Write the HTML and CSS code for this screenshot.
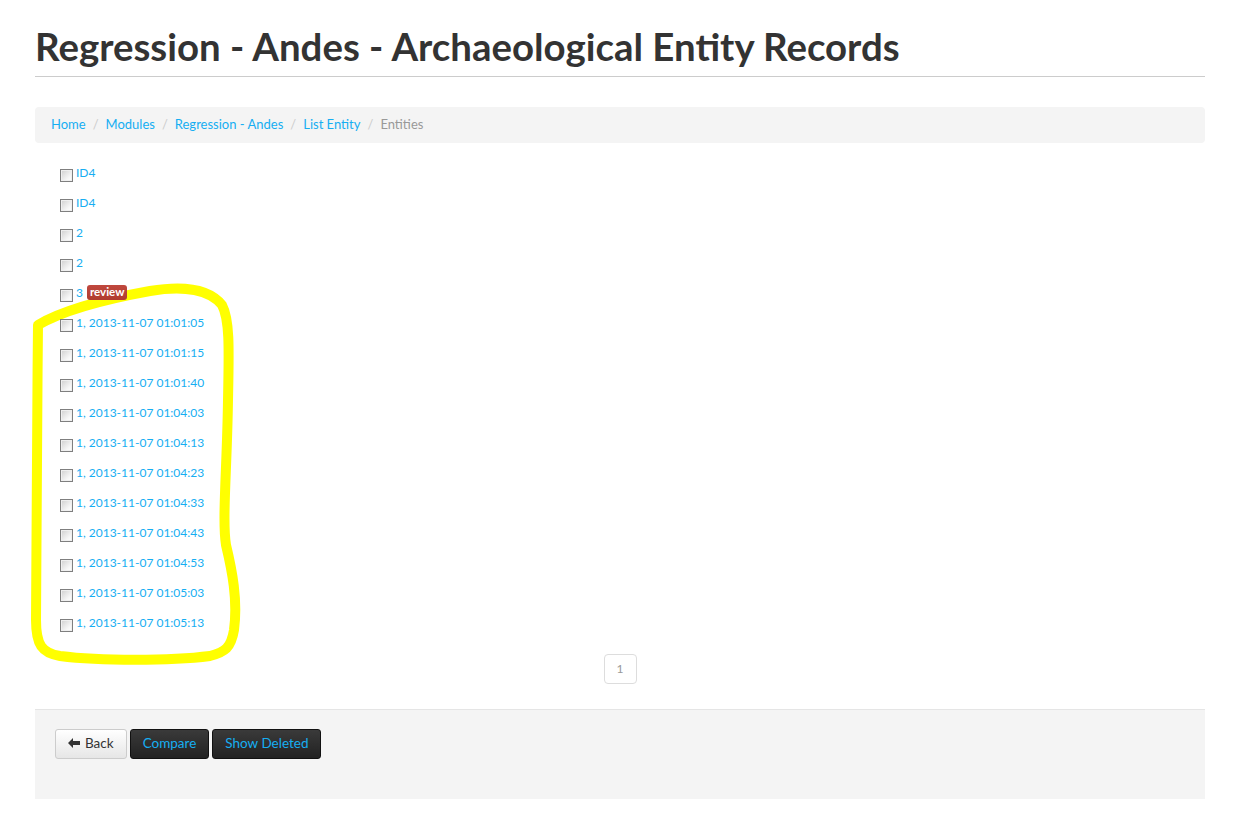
FILE: index.html
```html
<!DOCTYPE html>
<html>
<head>
<meta charset="utf-8">
<link rel="stylesheet" href="styles.css">
</head>
<body>
<div class="container">
  <h1 class="page-title">Regression - Andes - Archaeological Entity Records</h1>
  <ul class="breadcrumb">
    <li><a href="#">Home</a></li>
    <li><a href="#">Modules</a></li>
    <li><a href="#">Regression - Andes</a></li>
    <li><a href="#">List Entity</a></li>
    <li class="active">Entities</li>
  </ul>
  <div class="entities">
    <svg class="scribble" width="260" height="400" viewBox="0 0 260 400">
      <path d="M38 45 C60 32 100 20 150 11 C185 5 210 10 222 25 C230 40 229 70 228 120 C227 190 222 240 226 265 C232 290 238 320 234 350 C231 368 225 372 210 376 C170 381 100 381 60 376 C42 373 36 365 36 340 C36 260 37 150 38 45 Z" fill="none" stroke="#ffff00" stroke-width="10" stroke-linejoin="round"/>
    </svg>
    <ul class="entity-list">
      <li><input type="checkbox" class="cb"><a href="#">ID4</a></li>
      <li><input type="checkbox" class="cb"><a href="#">ID4</a></li>
      <li><input type="checkbox" class="cb"><a href="#">2</a></li>
      <li><input type="checkbox" class="cb"><a href="#">2</a></li>
      <li><input type="checkbox" class="cb"><a href="#">3</a><span class="label">review</span></li>
      <li><input type="checkbox" class="cb"><a href="#">1, 2013-11-07 01:01:05</a></li>
      <li><input type="checkbox" class="cb"><a href="#">1, 2013-11-07 01:01:15</a></li>
      <li><input type="checkbox" class="cb"><a href="#">1, 2013-11-07 01:01:40</a></li>
      <li><input type="checkbox" class="cb"><a href="#">1, 2013-11-07 01:04:03</a></li>
      <li><input type="checkbox" class="cb"><a href="#">1, 2013-11-07 01:04:13</a></li>
      <li><input type="checkbox" class="cb"><a href="#">1, 2013-11-07 01:04:23</a></li>
      <li><input type="checkbox" class="cb"><a href="#">1, 2013-11-07 01:04:33</a></li>
      <li><input type="checkbox" class="cb"><a href="#">1, 2013-11-07 01:04:43</a></li>
      <li><input type="checkbox" class="cb"><a href="#">1, 2013-11-07 01:04:53</a></li>
      <li><input type="checkbox" class="cb"><a href="#">1, 2013-11-07 01:05:03</a></li>
      <li><input type="checkbox" class="cb"><a href="#">1, 2013-11-07 01:05:13</a></li>
    </ul>
  </div>
  <div class="pager"><span class="page">1</span></div>
  <div class="form-actions">
    <button class="btn btn-default"><svg class="arrow" width="12" height="10" viewBox="0 0 12 10"><path d="M0 5 L5 0 L5 3 L12 3 L12 7 L5 7 L5 10 Z" fill="#333"/></svg>Back</button>
    <button class="btn btn-dark">Compare</button>
    <button class="btn btn-dark">Show Deleted</button>
  </div>
</div>
</body>
</html>
```
FILE: styles.css
```css
* { box-sizing: border-box; }
body {
  margin: 0;
  font-family: "Lato", "Open Sans", sans-serif;
  color: #333;
  background: #fff;
}
.container {
  width: 1170px;
  margin-left: 35px;
}
.page-title {
  margin: 0;
  padding-top: 25px;
  padding-bottom: 8px;
  font-size: 38.4px;
  font-weight: 700;
  line-height: 43px;
  color: #333;
  border-bottom: 1px solid #ccc;
}
.breadcrumb {
  list-style: none;
  margin: 30px 0 0;
  padding: 0 16px 2px;
  height: 36px;
  display: flex;
  align-items: center;
  background: #f4f4f4;
  border-radius: 4px;
  font-size: 13px;
}
.breadcrumb li { color: #999; }
.breadcrumb li + li::before {
  content: "/";
  color: #ccc;
  padding: 0 7px;
}
.breadcrumb a { color: #16aef2; text-decoration: none; }
.entities {
  position: relative;
  margin-top: 14px;
}
.scribble {
  position: absolute;
  left: -35px;
  top: 123px;
}
.entity-list {
  position: relative;
  list-style: none;
  margin: 0;
  padding: 0 0 0 25px;
}
.entity-list li {
  height: 30px;
  display: flex;
  align-items: center;
  font-size: 12px;
}
.entity-list a { color: #16aef2; text-decoration: none; }
.cb {
  appearance: none;
  -webkit-appearance: none;
  width: 13px;
  height: 13px;
  margin: 6px 3px 0 0;
  border: 1px solid #7f7f7f;
  background: linear-gradient(135deg, #cfcfcf, #f7f7f7 70%, #fff);
  box-shadow: inset 0 0 0 1px #efefef;
}
.label {
  display: inline-block;
  margin-left: 4px;
  padding: 1px 3px 2px;
  background: linear-gradient(#c0483e, #b03c2f);
  color: #fff;
  font-weight: 700;
  font-size: 11.5px;
  line-height: 12px;
  border-radius: 3px;
}
.pager {
  display: flex;
  justify-content: center;
  margin-top: 17px;
}
.page {
  display: inline-block;
  width: 33px;
  height: 30px;
  line-height: 28px;
  text-align: center;
  border: 1px solid #ddd;
  border-radius: 4px;
  font-size: 12px;
  color: #999;
  background: #fff;
}
.form-actions {
  margin-top: 25px;
  height: 90px;
  padding: 19px 20px;
  background: #f4f4f4;
  border-top: 1px solid #e5e5e5;
  display: flex;
  align-items: flex-start;
  gap: 3px;
}
.btn {
  height: 30px;
  padding: 0 12px 2px;
  font-family: inherit;
  font-size: 13.5px;
  border-radius: 3px;
  display: inline-flex;
  align-items: center;
  cursor: pointer;
}
.btn-default {
  background: linear-gradient(#fff, #e6e6e6);
  border: 1px solid #ccc;
  color: #333;
}
.arrow { margin-right: 5px; }
.btn-dark {
  background: linear-gradient(#3a3a3a, #222);
  border: 1px solid #111;
  color: #16aef2;
}
```
